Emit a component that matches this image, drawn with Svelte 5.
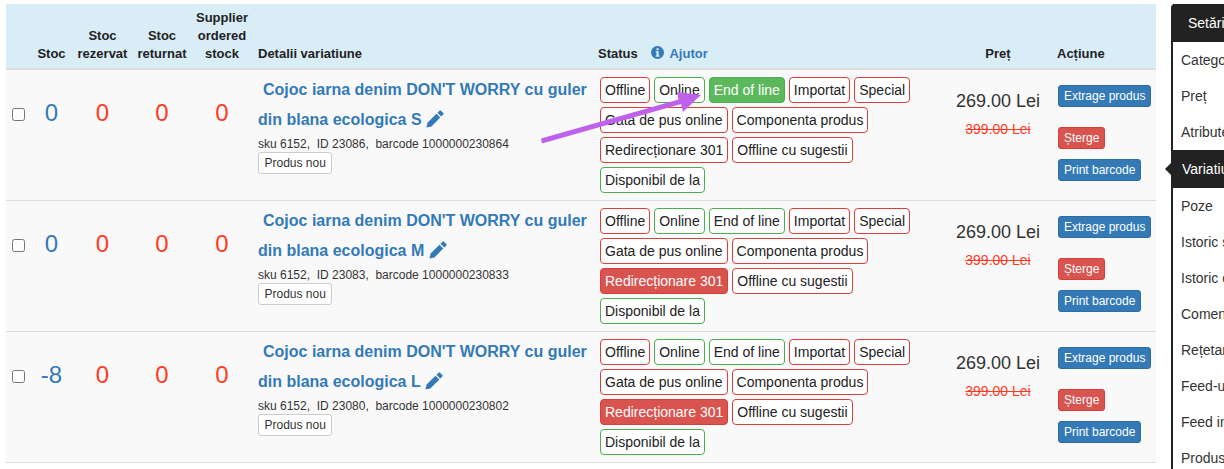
<script lang="ts">
	const statuses = [
		'Offline', 'Online', 'End of line', 'Importat', 'Special',
		'Gata de pus online', 'Componenta produs',
		'Redirecționare 301', 'Offline cu sugestii', 'Disponibil de la'
	];
	const greenOutline = ['Online', 'End of line', 'Disponibil de la'];

	const rows = [
		{ size: 'S', stock: 0, id: 23086, barcode: '1000000230864', on: 'End of line', onClass: 'on-green' },
		{ size: 'M', stock: 0, id: 23083, barcode: '1000000230833', on: 'Redirecționare 301', onClass: 'on-red' },
		{ size: 'L', stock: -8, id: 23080, barcode: '1000000230802', on: 'Redirecționare 301', onClass: 'on-red' }
	];

	const menu = ['Categorii', 'Preț', 'Atribute', 'Variatiuni', 'Poze', 'Istoric stoc', 'Istoric comenzi', 'Comentarii', 'Rețetar', 'Feed-uri', 'Feed import', 'Produse'];
	const activeMenu = 'Variatiuni';

	function statusClass(row: (typeof rows)[number], name: string) {
		if (row.on === name) return row.onClass;
		return greenOutline.includes(name) ? 'out-green' : 'out-red';
	}
</script>

<div class="page">
	<div class="main">
		<table>
			<colgroup>
				<col style="width: 24px" />
				<col style="width: 43px" />
				<col style="width: 59px" />
				<col style="width: 60px" />
				<col style="width: 60px" />
				<col style="width: 338px" />
				<col style="width: 357px" />
				<col style="width: 102px" />
				<col />
			</colgroup>
			<thead>
				<tr>
					<th></th>
					<th class="center">Stoc</th>
					<th class="center">Stoc rezervat</th>
					<th class="center">Stoc returnat</th>
					<th class="center">Supplier ordered stock</th>
					<th class="detail-head">Detalii variatiune</th>
					<th>
						Status
						<span class="help">
							<svg viewBox="0 0 16 16" width="13" height="13" aria-hidden="true">
								<circle cx="8" cy="8" r="8" fill="#337ab7" />
								<rect x="6.8" y="2.8" width="2.6" height="2.4" fill="#d9edf7" />
								<path d="M5.8 6.4h3.6v5.2h1.1v1.6H5.800v-1.600h1v-3.600h-1z" fill="#d9edf7" />
							</svg>
							Ajutor
						</span>
					</th>
					<th class="center">Preț</th>
					<th>Acțiune</th>
				</tr>
			</thead>
			<tbody>
				{#each rows as row}
					<tr>
						<td class="check"><input type="checkbox" /></td>
						<td class="num blue">{row.stock}</td>
						<td class="num red">0</td>
						<td class="num red">0</td>
						<td class="num red">0</td>
						<td class="details">
							<div class="title">
								Cojoc iarna denim DON'T WORRY cu guler din blana ecologica {row.size}
								<svg class="pencil" viewBox="0 0 16 16" width="18" height="18" aria-hidden="true">
									<path d="M12 .6a1 1 0 0 1 1.300 0l2.100 2.100a1 1 0 0 1 0 1.300l-1.800 1.800-3.400-3.400zM9.300 3.300l3.400 3.400-7.900 7.900-4.400 1 1-4.400z" fill="#337ab7" />
								</svg>
							</div>
							<div class="meta">sku 6152,&nbsp; ID {row.id},&nbsp; barcode {row.barcode}</div>
							<span class="tag">Produs nou</span>
						</td>
						<td class="status">
							<div class="status-list">
								{#each statuses as name}
									<span class="chip {statusClass(row, name)}">{name}</span>
								{/each}
							</div>
						</td>
						<td class="price">
							<div class="now">269.00 Lei</div>
							<div class="old">399.00 Lei</div>
						</td>
						<td class="actions">
							<div class="action-list">
								<span class="btn primary first">Extrage produs</span>
								<span class="btn danger">Șterge</span>
								<span class="btn primary">Print barcode</span>
							</div>
						</td>
					</tr>
				{/each}
			</tbody>
		</table>
		<svg class="arrow" width="170" height="64" viewBox="0 0 170 64" aria-hidden="true">
			<path d="M1 55.500L138.500 16.500 137 9l24 3-18 17-2-8L2 60.500z" fill="#c061ec" />
		</svg>
	</div>

	<aside class="side">
		<div class="side-head">Setări produs</div>
		{#each menu as item}
			<div class="side-item" class:active={item === activeMenu}>{item}</div>
		{/each}
	</aside>
</div>

<style>
	:global(body) {
		margin: 0;
		background: #fff;
		overflow: hidden;
		font-family: 'Liberation Sans', Arial, sans-serif;
		color: #333;
	}

	.page {
		display: flex;
		align-items: flex-start;
		gap: 15px;
		padding: 4px 0 0 6px;
		width: 1400px;
		height: 465px;
		overflow: hidden;
	}

	.main {
		position: relative;
		width: 1150px;
		flex-shrink: 0;
	}

	table {
		width: 1150px;
		table-layout: fixed;
		border-collapse: collapse;
		font-size: 13px;
	}

	thead tr {
		background: #d9edf7;
	}

	th {
		padding: 5px 0 5px 8px;
		border-bottom: 2px solid #ddd;
		font-size: 13px;
		line-height: 18px;
		font-weight: 700;
		text-align: left;
		vertical-align: bottom;
		color: #222;
	}

	th.center {
		padding: 5px 2px 5px;
		text-align: center;
	}

	th.detail-head {
		padding-left: 6px;
	}

	.help {
		margin-left: 10px;
		color: #337ab7;
	}

	.help svg {
		vertical-align: -1px;
		margin-right: 2px;
	}

	tbody tr {
		background: #f9f9f9;
		height: 131px;
	}

	td {
		padding: 0;
		border-bottom: 1px solid #ddd;
		vertical-align: top;
	}

	.check {
		padding: 38px 0 0 6px;
	}

	.check input {
		display: block;
		width: 13px;
		height: 13px;
		margin: 0;
	}

	.num {
		padding-top: 29px;
		font-size: 24px;
		line-height: 28px;
		text-align: center;
	}

	.blue {
		color: #337ab7;
	}

	.red {
		color: #ff3b1f;
	}

	.details {
		padding: 5px 0 0 6px;
	}

	.title {
		font-size: 16px;
		line-height: 30px;
		font-weight: 700;
		color: #337ab7;
		text-indent: 5px;
	}

	.pencil {
		vertical-align: -3px;
	}

	.meta {
		margin-top: 1px;
		font-size: 12px;
		line-height: 17px;
		color: #333;
	}

	.tag {
		display: inline-block;
		margin-top: -1px;
		padding: 1px 5.500px;
		border: 1px solid #ccc;
		border-radius: 3px;
		background: #fff;
		font-size: 12px;
		line-height: 18px;
	}

	.status {
		padding: 7px 0 0 10px;
	}

	.status-list {
		display: flex;
		flex-wrap: wrap;
		gap: 4px;
		width: 320px;
	}

	.chip {
		display: block;
		padding: 2px 4px;
		border: 1px solid;
		border-radius: 4px;
		background: #fff;
		font-size: 14px;
		line-height: 20px;
		color: #222;
		white-space: nowrap;
	}

	.out-red {
		border-color: #d9403c;
	}

	.out-green {
		border-color: #4cae4c;
	}

	.on-green {
		border-color: #4cae4c;
		background: #5cb85c;
		color: #fff;
	}

	.on-red {
		border-color: #d43f3a;
		background: #d9534f;
		color: #fff;
	}

	.price {
		padding-top: 20px;
		text-align: center;
	}

	.now {
		font-size: 18px;
		line-height: 22px;
	}

	.old {
		margin-top: 7px;
		font-size: 14px;
		line-height: 20px;
		color: #ff3b1f;
		text-decoration: line-through;
	}

	.actions {
		padding: 15px 0 0 9px;
	}

	.action-list {
		display: flex;
		flex-direction: column;
		align-items: flex-start;
		gap: 10px;
	}

	.btn {
		padding: 1px 5px;
		border: 1px solid;
		border-radius: 3px;
		font-size: 12px;
		line-height: 18px;
		color: #fff;
		white-space: nowrap;
	}

	.btn.first {
		margin-bottom: 10px;
	}

	.primary {
		background: #337ab7;
		border-color: #2e6da4;
	}

	.danger {
		background: #d9534f;
		border-color: #d43f3a;
	}

	.arrow {
		position: absolute;
		left: 534px;
		top: 79px;
		pointer-events: none;
	}

	.side {
		width: 200px;
		flex-shrink: 0;
		border-left: 2px solid #222;
		border-top-left-radius: 4px;
		background: #fff;
		font-size: 14px;
		color: #333;
	}

	.side-head {
		height: 38px;
		padding-left: 15px;
		line-height: 38px;
		background: #222;
		color: #fff;
	}

	.side-item {
		position: relative;
		height: 36px;
		padding-left: 8px;
		line-height: 36px;
	}

	.side-item.active {
		height: 38px;
		padding-left: 9px;
		line-height: 38px;
		background: #222;
		color: #fff;
	}

	.side-item.active::before {
		content: '';
		position: absolute;
		left: -8px;
		top: 13px;
		border-style: solid;
		border-width: 6px 6px 6px 0;
		border-color: transparent #222 transparent transparent;
	}
</style>
